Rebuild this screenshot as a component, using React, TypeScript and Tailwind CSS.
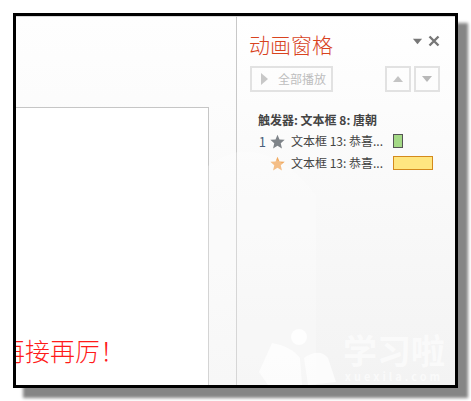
const cjk = { fontFamily: '"Noto Sans CJK SC", sans-serif' }

function Tri({ dir, color, size = 12 }: { dir: 'up' | 'down' | 'right'; color: string; size?: number }) {
  const points = dir === 'up' ? '1,9 11,9 6,3' : dir === 'down' ? '1,3 11,3 6,9' : '2,0 2,12 9,6'
  return (
    <svg width={size} height={size} viewBox="0 0 12 12">
      <polygon points={points} fill={color} />
    </svg>
  )
}

function Star({ color }: { color: string }) {
  return (
    <svg width="15" height="15" viewBox="0 0 24 24" className="shrink-0">
      <polygon points="12,1 15.2,8.6 23.5,9.3 17.2,14.8 19.1,23 12,18.7 4.9,23 6.8,14.8 0.5,9.3 8.8,8.6" fill={color} />
    </svg>
  )
}

function Row({ num, star, bar }: { num?: string; star: string; bar: string }) {
  return (
    <div className="flex h-[22px] items-center">
      <span className="w-[9px] text-[13px] text-right text-[#4a5f7a] leading-none">{num}</span>
      <span className="ml-[4px]"><Star color={star} /></span>
      <span className="ml-[6px] w-[102px] text-[12px] text-[#444] whitespace-nowrap leading-none">文本框 13: 恭喜...</span>
      <div className={bar} />
    </div>
  )
}

export default function App() {
  return (
    <div className="w-[471px] h-[401px] bg-white pl-[13px] pt-[13px] overflow-hidden" style={cjk}>
      <div className="relative w-[445px] h-[375px] border-[3px] border-black shadow-[10px_10px_3px_#858585] flex overflow-hidden bg-white">
        {/* slide area */}
        <div className="w-[220px] h-full pt-[90px] bg-gradient-to-b from-[#fefefe] to-[#f5f5f5] border-t border-[#d8d8d8] overflow-hidden">
          <div className="w-[193px] h-full bg-white border-t border-r border-[#c6c6c6] flex flex-col justify-end pb-[18px]">
            <div className="flex justify-start overflow-hidden">
              <span className="ml-[-16px] text-[25px] font-light leading-[34px] text-[#ff1a1a] whitespace-nowrap">再接再厉！</span>
            </div>
          </div>
        </div>

        {/* animation pane */}
        <div className="flex-1 border-l border-[#c8c8c8] border-t border-t-[#d8d8d8] bg-gradient-to-b from-white to-[#f3f3f3] pl-[13px] pr-[15px] pt-[14px]">
          <div className="flex items-center justify-between h-[26px]">
            <span className="ml-[-1px] text-[21px] font-light leading-none text-[#d8431f]">动画窗格</span>
            <div className="flex items-center gap-[5px] mt-[-6px]">
              <Tri dir="down" color="#777" size={11} />
              <svg width="12" height="12" viewBox="0 0 12 12">
                <path d="M1.5 1.5 10.5 10.5M10.5 1.5 1.5 10.5" stroke="#777" strokeWidth="2.4" />
              </svg>
            </div>
          </div>
          <div className="flex items-center mt-[9px]">
            <button className="w-[83px] h-[26px] border-2 border-[#e2e2e2] flex items-center pl-[7px] text-[12px] text-[#bdbdbd]">
              <Tri dir="right" color="#c8c8c8" size={12} />
              <span className="ml-[7px] whitespace-nowrap">全部播放</span>
            </button>
            <button className="ml-[52px] w-[26px] h-[26px] border-2 border-[#e2e2e2] flex items-center justify-center">
              <Tri dir="up" color="#c4c4c4" />
            </button>
            <button className="ml-[3px] w-[26px] h-[26px] border-2 border-[#e2e2e2] flex items-center justify-center">
              <Tri dir="down" color="#b8b8b8" />
            </button>
          </div>
          <div className="mt-[20px] ml-[8px] text-[12px] font-bold text-[#444] leading-[16px] whitespace-nowrap">触发器: 文本框 8: 唐朝</div>
          <div className="mt-[2px] ml-[7px]">
            <Row num="1" star="#7f8489" bar="w-[10px] h-[14px] bg-[#a4d986] border border-[#555]" />
            <Row star="#f0a95f" bar="w-[40px] h-[14px] bg-[#ffe680] border border-[#d48a1c]" />
          </div>
        </div>

        {/* watermark */}
        <svg className="absolute left-[180px] top-[110px] pointer-events-none" width="260" height="260" viewBox="0 0 260 260">
          <path d="M12 40 C50 10 90 30 120 70 L120 260 L12 260 Z" fill="#fff" opacity="0.25" />
          <circle cx="103" cy="211" r="8" fill="#fff" opacity="0.8" />
          <path d="M63 246 L76 217 C88 219 98 224 104 232 L106 259 L72 259 Z" fill="#fff" opacity="0.7" />
          <path d="M108 232 C116 226 126 224 132 232 L140 256 L112 259 Z" fill="#fff" opacity="0.7" />
        </svg>
        <div className="absolute left-[327px] top-[315px] pointer-events-none flex flex-col items-center">
          <span className="text-[34px] font-bold leading-[38px] text-white/60 whitespace-nowrap">学习啦</span>
          <span className="mt-[2px] text-[11px] font-bold leading-[11px] tracking-[3px] text-white/60 whitespace-nowrap">xuexila.com</span>
        </div>
      </div>
    </div>
  )
}
